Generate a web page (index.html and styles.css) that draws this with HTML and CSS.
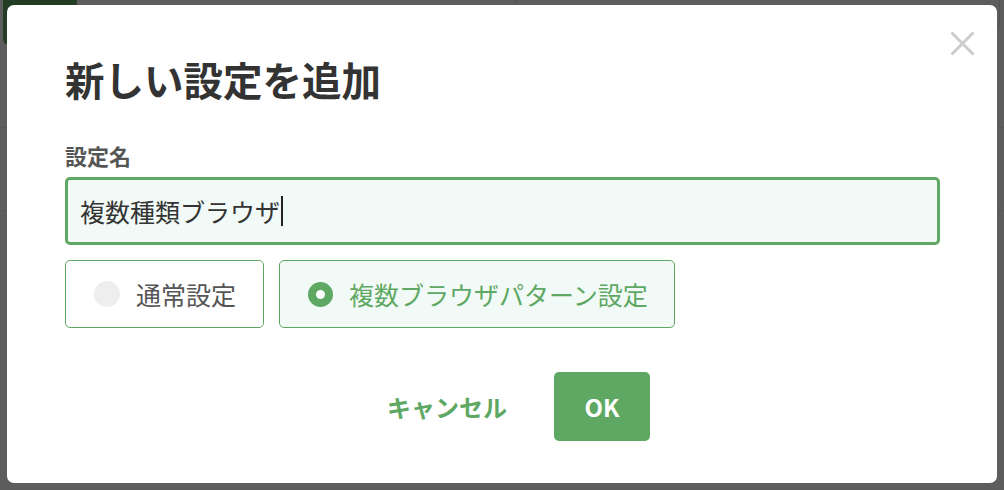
FILE: index.html
```html
<!DOCTYPE html>
<html lang="ja">
<head>
  <meta charset="utf-8">
  <title>新しい設定を追加</title>
  <link rel="stylesheet" href="styles.css">
</head>
<body>
  <div class="page">
    <div class="page-top">
      <div class="page-btn"></div>
      <div class="page-panel"></div>
    </div>
    <div class="page-row"></div>
    <div class="page-row"></div>
  </div>

  <div class="overlay"></div>

  <div class="modal">
    <button class="close-btn" aria-label="閉じる">
      <svg width="25" height="25" viewBox="0 0 25 25">
        <path d="M1.5 1.5 L23.5 23.5 M23.5 1.5 L1.5 23.5" stroke="#cccccc" stroke-width="3" fill="none"/>
      </svg>
    </button>

    <h1 class="modal-title">新しい設定を追加</h1>

    <label class="field-label">設定名</label>
    <div class="text-field">複数種類ブラウザ<span class="caret"></span></div>

    <div class="type-options">
      <div class="type-option">
        <span class="radio"></span>
        <span>通常設定</span>
      </div>
      <div class="type-option selected">
        <span class="radio"></span>
        <span>複数ブラウザパターン設定</span>
      </div>
    </div>

    <div class="modal-actions">
      <button class="btn-cancel">キャンセル</button>
      <button class="btn-ok">OK</button>
    </div>
  </div>
</body>
</html>
```

FILE: styles.css
```css
body {
  margin: 0;
  font-family: "Noto Sans CJK JP", "Noto Sans", sans-serif;
  background-color: #ffffff;
  width: 1004px;
  height: 490px;
  overflow: hidden;
}

/* page behind the dialog */
.page {
  height: 490px;
}

.page-top {
  display: flex;
  justify-content: space-between;
  height: 45px;
}

.page-btn {
  width: 74px;
  height: 45px;
  margin-left: 3px;
  background-color: #5fa864;
  border-radius: 0 0 6px 6px;
}

.page-panel {
  width: 482px;
  height: 28px;
  margin-right: 4px;
  border: 1px solid #e4e4e4;
  border-top: none;
  border-radius: 0 0 6px 6px;
}

.page-row {
  height: 28px;
  margin-top: 54px;
  border-bottom: 1px solid #eeeeee;
}

.overlay {
  position: fixed;
  inset: 0;
  background-color: rgba(0, 0, 0, 0.635);
}

/* dialog */
.modal {
  position: absolute;
  left: 7px;
  top: 5px;
  width: 990px;
  height: 478px;
  box-sizing: border-box;
  padding: 47px 57px 0 58px;
  background-color: #fff;
  border-radius: 7px;
}

.close-btn {
  position: absolute;
  top: 26px;
  right: 22px;
  padding: 0;
  border: none;
  background: none;
  display: flex;
}

.modal-title {
  margin: 0;
  font-size: 39.5px;
  line-height: 53px;
  font-weight: bold;
  color: #333333;
}

.field-label {
  display: block;
  margin-top: 35px;
  font-size: 22px;
  line-height: 30px;
  font-weight: bold;
  color: #555555;
}

.text-field {
  margin-top: 7px;
  height: 68px;
  box-sizing: border-box;
  padding: 0 12px;
  display: flex;
  align-items: center;
  border: 3px solid #5fa864;
  border-radius: 5px;
  background-color: #f1faf6;
  font-size: 25px;
  color: #333333;
}

.caret {
  display: inline-block;
  width: 2px;
  height: 30px;
  margin-left: 1px;
  background-color: #222;
}

.type-options {
  display: flex;
  gap: 15px;
  margin-top: 15px;
}

.type-option {
  display: flex;
  align-items: center;
  gap: 16px;
  height: 68px;
  box-sizing: border-box;
  padding: 0 27px 0 28px;
  border: 1px solid #5fa864;
  border-radius: 5px;
  background-color: #fff;
  font-size: 25px;
  color: #555555;
}

.type-option .radio {
  width: 26px;
  height: 26px;
  border-radius: 50%;
  background-color: #eeeeee;
  box-sizing: border-box;
}

.type-option.selected {
  padding-right: 26px;
  background-color: #f1faf6;
  color: #5fa864;
}

.type-option.selected .radio {
  width: 25px;
  height: 25px;
  background-color: #fff;
  border: 8px solid #5fa864;
}

.modal-actions {
  display: flex;
  justify-content: center;
  gap: 25px;
  margin-top: 44px;
  padding-left: 10px;
}

.modal-actions button {
  height: 69px;
  border: none;
  border-radius: 5px;
  font-family: inherit;
  font-size: 24px;
  font-weight: bold;
}

.btn-cancel {
  padding: 0 22px;
  background: none;
  color: #5fa864;
}

.btn-ok {
  width: 96px;
  background-color: #5fa864;
  color: #fff;
  font-family: "Liberation Sans", "Noto Sans CJK JP", sans-serif;
}
```
